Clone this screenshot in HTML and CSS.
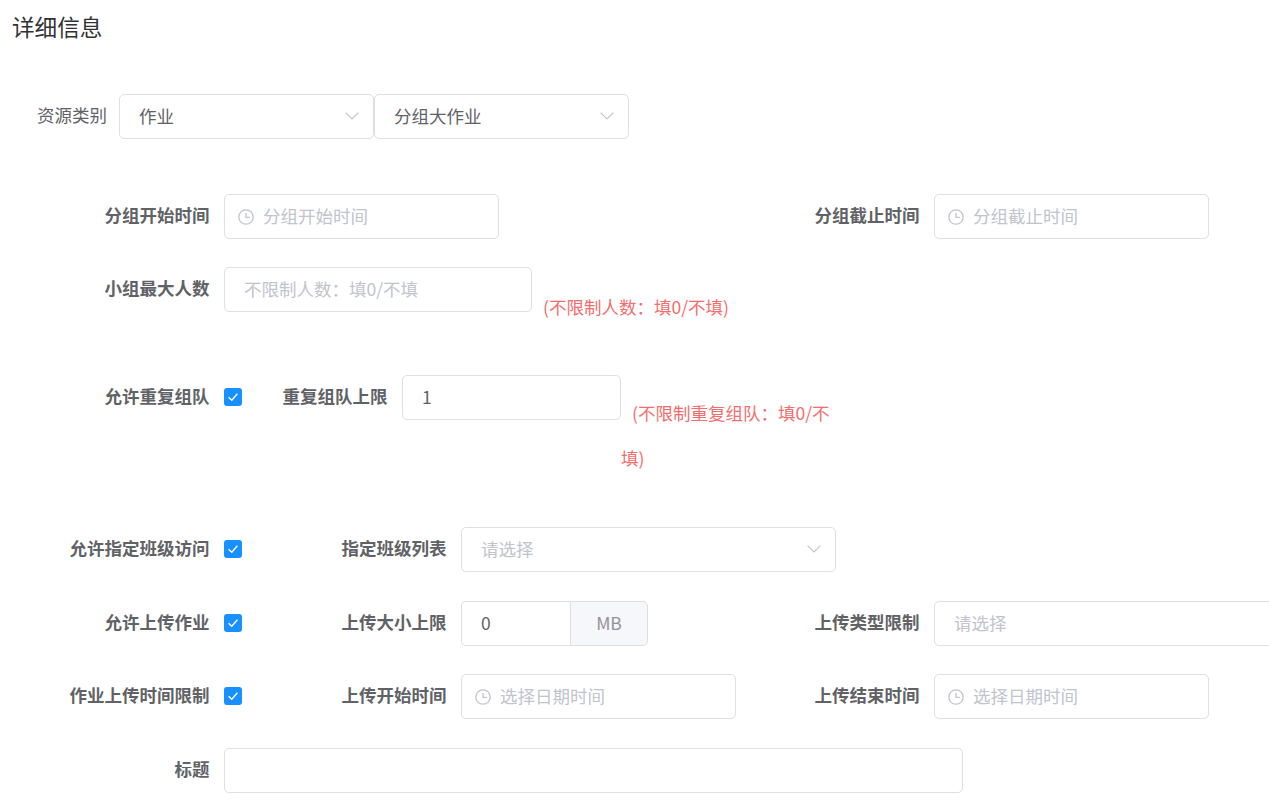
FILE: index.html
```html
<!DOCTYPE html>
<html lang="zh-CN">
<head>
<meta charset="utf-8">
<title>详细信息</title>
<link rel="stylesheet" href="styles.css">
</head>
<body>
<svg class="defs" width="0" height="0" aria-hidden="true">
  <symbol id="clock" viewBox="0 0 16 16"><circle cx="8" cy="8" r="7.2" fill="none" stroke="currentColor" stroke-width="1.3"/><path d="M8 3.9V8.4H11.9" fill="none" stroke="currentColor" stroke-width="1.3"/></symbol>
  <symbol id="chev" viewBox="0 0 14 8"><path d="M.6.6 7 7 13.4.6" fill="none" stroke="currentColor" stroke-width="1.1"/></symbol>
  <symbol id="tick" viewBox="0 0 18 18"><path d="M4.6 9.2 7.8 12.2 13.4 5.8" fill="none" stroke="#fff" stroke-width="1.3"/></symbol>
</svg>
<main class="page">
  <h2 class="title">详细信息</h2>

  <div class="row row-type">
    <div class="label label-plain">资源类别</div>
    <div class="box w-255"><span class="val">作业</span><svg class="chev"><use href="#chev"/></svg></div>
    <div class="box w-255"><span class="val">分组大作业</span><svg class="chev"><use href="#chev"/></svg></div>
  </div>

  <div class="row row-start">
    <div class="label lw-224">分组开始时间</div>
    <div class="box w-275 date"><svg class="clock"><use href="#clock"/></svg><span class="ph">分组开始时间</span></div>
    <div class="label lw-435">分组截止时间</div>
    <div class="box w-275 date"><svg class="clock"><use href="#clock"/></svg><span class="ph">分组截止时间</span></div>
  </div>

  <div class="row row-max">
    <div class="label lw-224">小组最大人数</div>
    <div class="box w-308"><span class="ph">不限制人数：填0/不填</span></div>
    <div class="hint hint-max">(不限制人数：填0/不填)</div>
  </div>

  <div class="row row-repeat">
    <div class="label lw-224">允许重复组队</div>
    <div class="check"><svg class="tick"><use href="#tick"/></svg></div>
    <div class="label lw-160">重复组队上限</div>
    <div class="box w-219"><span class="val">1</span></div>
    <div class="hint hint-repeat"><span class="hint-first">(不限制重复组队：填0/不填)</span></div>
  </div>

  <div class="row row-class">
    <div class="label lw-224">允许指定班级访问</div>
    <div class="check"><svg class="tick"><use href="#tick"/></svg></div>
    <div class="label lw-219">指定班级列表</div>
    <div class="box w-375"><span class="ph">请选择</span><svg class="chev"><use href="#chev"/></svg></div>
  </div>

  <div class="row row-upload">
    <div class="label lw-224">允许上传作业</div>
    <div class="check"><svg class="tick"><use href="#tick"/></svg></div>
    <div class="label lw-219">上传大小上限</div>
    <div class="group">
      <div class="box w-109 joined"><span class="val">0</span></div>
      <div class="append">MB</div>
    </div>
    <div class="label lw-286">上传类型限制</div>
    <div class="box w-360"><span class="ph">请选择</span></div>
  </div>

  <div class="row row-limit">
    <div class="label lw-224">作业上传时间限制</div>
    <div class="check"><svg class="tick"><use href="#tick"/></svg></div>
    <div class="label lw-219">上传开始时间</div>
    <div class="box w-275 date"><svg class="clock"><use href="#clock"/></svg><span class="ph">选择日期时间</span></div>
    <div class="label lw-198">上传结束时间</div>
    <div class="box w-275 date"><svg class="clock"><use href="#clock"/></svg><span class="ph">选择日期时间</span></div>
  </div>

  <div class="row row-title">
    <div class="label lw-224">标题</div>
    <div class="box w-739"></div>
  </div>
</main>
</body>
</html>
```

FILE: styles.css
```css
* { box-sizing: border-box; }
html, body { margin: 0; padding: 0; height: 100%; background: #fff; overflow: hidden; }
body { font-family: "Noto Sans CJK SC", "Noto Sans", sans-serif; font-size: 17.5px; color: #606266; }
.defs { position: absolute; }
.page { width: 1269px; }

.title { margin: 0; padding: 11px 0 0 12px; height: 94px; font-size: 22.6px; line-height: 32px; font-weight: 400; color: #303133; }

.row { display: flex; align-items: flex-start; flex: none; }
.row-start { margin-top: 55px; }
.row-max { margin-top: 28px; }
.row-repeat { margin-top: 46.5px; }
.row-class { margin-top: 47.5px; }
.row-upload { margin-top: 29px; }
.row-limit { margin-top: 28px; }
.row-title { margin-top: 29px; }

.label { height: 45px; line-height: 42px; padding-right: 14.5px; text-align: right; font-weight: 700; white-space: nowrap; flex: none; }
.label-plain { width: 119px; padding-right: 12px; font-weight: 400; }
.lw-224 { width: 224px; }
.lw-160 { width: 160px; }
.lw-219 { width: 219px; }
.lw-435 { width: 435px; }
.lw-286 { width: 286px; }
.lw-198 { width: 198px; }

.box { height: 45px; border: 1px solid #dcdfe6; border-radius: 5px; padding: 0 19px; display: flex; align-items: center; flex: none; background: #fff; line-height: 41px; }
.box.date { padding: 0 13px; }
.w-109 { width: 109px; }
.w-219 { width: 219px; }
.w-255 { width: 255px; }
.w-275 { width: 275px; }
.w-308 { width: 308px; }
.w-360 { width: 360px; }
.w-375 { width: 375px; }
.w-739 { width: 739px; }

.val { color: #606266; margin-top: -2px; }
.ph { color: #c0c4cc; margin-top: -2px; }
.clock { width: 16px; height: 16px; color: #c0c4cc; margin-right: 9px; flex: none; }
.chev { width: 14px; height: 8px; color: #c0c4cc; margin-left: auto; margin-right: -5px; margin-top: -1px; flex: none; }

.check { width: 18px; height: 18px; margin-top: 12.5px; border-radius: 3px; background: #1890ff; flex: none; }
.tick { width: 18px; height: 18px; display: block; }

.group { display: flex; flex: none; }
.joined { border-radius: 5px 0 0 5px; border-right: 0; }
.append { width: 78px; height: 45px; line-height: 41px; text-align: center; color: #909399; background: #f5f7fa; border: 1px solid #dcdfe6; border-radius: 0 5px 5px 0; }

.hint { color: #f56c6c; line-height: 45px; flex: none; }
.hint-max { margin: 16.5px 0 0 11px; }
.hint-repeat { width: 210px; margin-top: 14.5px; }
.hint-first { margin-left: 11px; }
```
